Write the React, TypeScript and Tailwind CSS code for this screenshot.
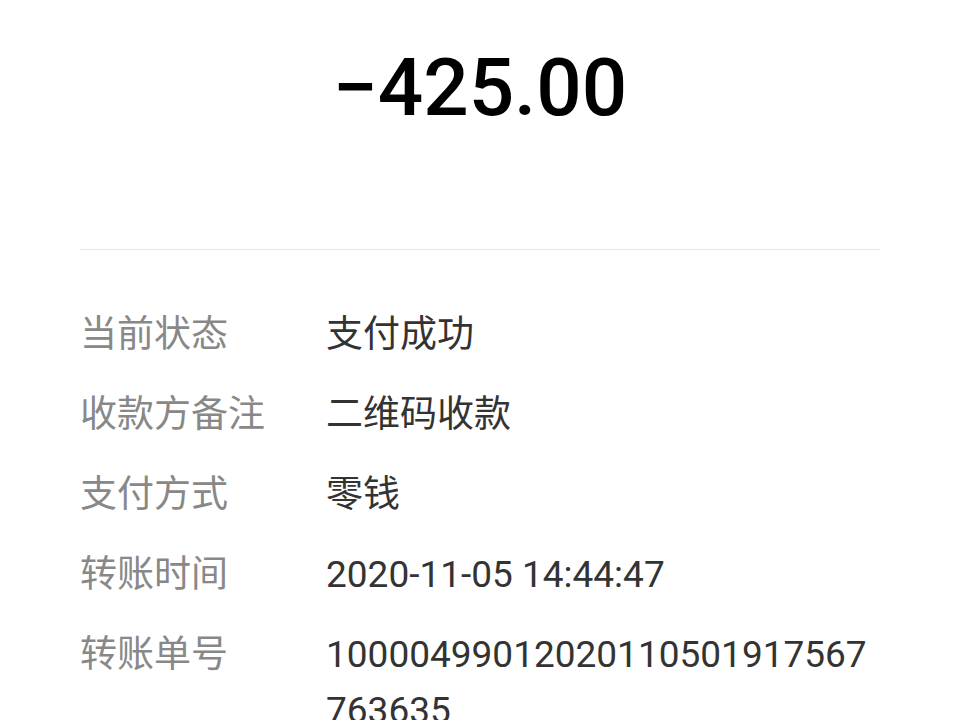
import React from 'react';

const rows: { label: string; value: string }[] = [
  { label: '当前状态', value: '支付成功' },
  { label: '收款方备注', value: '二维码收款' },
  { label: '支付方式', value: '零钱' },
  { label: '转账时间', value: '2020-11-05 14:44:47' },
  { label: '转账单号', value: '10000499012020110501917567763635' },
];

export default function App() {
  return (
    <div className="w-[960px] h-[720px] overflow-hidden bg-white px-[80px] font-['Roboto','Noto_Sans_CJK_SC',sans-serif]">
      <div className="pt-[48px] text-center text-[80px] leading-none font-medium text-black">
        −425.00
      </div>
      <div className="mt-[121px] h-px bg-[#e6e6e6]" />
      <div className="mt-[57px] flex flex-col gap-[24px]">
        {rows.map((row) => (
          <div key={row.label} className="flex items-start text-[37px] leading-[56px]">
            <div className="w-[246px] shrink-0 text-[#888888]">{row.label}</div>
            <div className="flex-1 min-w-0 break-all text-[#333333]">{row.value}</div>
          </div>
        ))}
      </div>
    </div>
  );
}
